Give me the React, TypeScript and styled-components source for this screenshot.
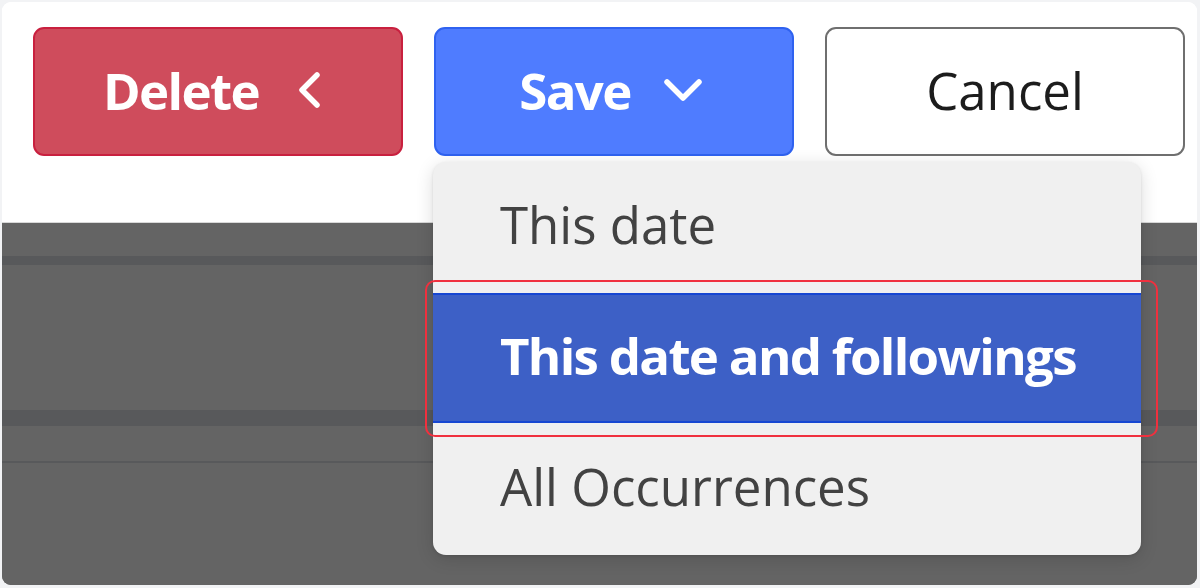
import React from "react";
import styled, { createGlobalStyle, css } from "styled-components";

const GlobalStyle = createGlobalStyle`
  * { box-sizing: border-box; }
  html, body {
    margin: 0;
    padding: 0;
    background: #f2f3f5;
    font-family: "Open Sans", "Noto Sans", Arial, sans-serif;
  }
`;

interface IButtonProps {
  variant: "danger" | "primary" | "plain";
  width: number;
  gap?: number;
  shift?: number;
}

interface IBandProps {
  height: number;
  dark?: boolean;
}

interface IItemProps {
  active?: boolean;
  height: number;
}

const ChevronLeft = () => (
  <svg width="24" height="36" viewBox="0 0 24 36" fill="none">
    <polyline
      points="19,3 4,18 19,33"
      stroke="#ffffff"
      strokeWidth="5.5"
      strokeLinecap="round"
      strokeLinejoin="round"
    />
  </svg>
);

const ChevronDown = () => (
  <svg width="40" height="26" viewBox="0 0 40 26" fill="none">
    <polyline
      points="4,5 20,21 36,5"
      stroke="#ffffff"
      strokeWidth="5.5"
      strokeLinecap="round"
      strokeLinejoin="round"
    />
  </svg>
);

const App = () => {
  return (
    <>
      <GlobalStyle />
      <Frame>
        <Card>
          <Toolbar>
            <ActionButton variant="danger" width={370} gap={39} shift={11}>
              Delete
              <ChevronLeft />
            </ActionButton>
            <ActionButton variant="primary" width={360} gap={32} shift={6}>
              Save
              <ChevronDown />
            </ActionButton>
            <ActionButton variant="plain" width={360}>
              Cancel
            </ActionButton>
          </Toolbar>
          <Backdrop>
            <Band height={33} />
            <Band height={9} dark />
            <Band height={145} />
            <Band height={16} dark />
            <Band height={35} />
            <Band height={2} dark />
            <Band height={0} />
          </Backdrop>
        </Card>

        <Menu>
          <MenuItem height={131}>This date</MenuItem>
          <MenuItem height={130} active>
            This date and followings
          </MenuItem>
          <MenuItem height={132}>All Occurrences</MenuItem>
        </Menu>
        <Highlight />
      </Frame>
    </>
  );
};

export default App;

export const Frame = styled.div`
  position: relative;
  width: 1200px;
  height: 588px;
  padding: 2px 3px 3px 2px;
  background: #f2f3f5;
`;

export const Card = styled.div`
  display: flex;
  flex-direction: column;
  width: 100%;
  height: 100%;
  border-radius: 9px;
  overflow: hidden;
  background: #ffffff;
`;

export const Toolbar = styled.div`
  display: flex;
  flex-direction: row;
  align-items: flex-start;
  gap: 31px;
  height: 221px;
  padding: 25px 0 0 31px;
  background: #ffffff;
  border-bottom: 1px solid #d8d8d8;
`;

const variants = {
  danger: css`
    background: #cf4c5c;
    border: 2px solid #c9203f;
    color: #ffffff;
    font-weight: 700;
    letter-spacing: -1.6px;
  `,
  primary: css`
    background: #4f7cff;
    border: 2px solid #2f62f0;
    color: #ffffff;
    font-weight: 700;
    letter-spacing: -1.6px;
  `,
  plain: css`
    background: #ffffff;
    border: 2px solid #6f6f6f;
    color: #1c1c1c;
    font-weight: 400;
    letter-spacing: 0;
  `,
};

export const ActionButton = styled.button<IButtonProps>`
  ${(props) => variants[props.variant]}
  display: flex;
  flex-direction: row;
  align-items: center;
  justify-content: center;
  gap: ${(props) => props.gap ?? 0}px;
  width: ${(props) => props.width}px;
  height: 129px;
  padding: 0 ${(props) => props.shift ?? 0}px 4px 0;
  border-radius: 11px;
  font-family: "Open Sans", "Noto Sans", Arial, sans-serif;
  font-size: 51px;
  cursor: pointer;
`;

export const Backdrop = styled.div`
  display: flex;
  flex-direction: column;
  flex: 1;
  background: #646464;
`;

export const Band = styled.div<IBandProps>`
  flex: ${(props) => (props.height === 0 ? "1" : "none")};
  height: ${(props) => props.height}px;
  background: ${(props) => (props.dark ? "#58595b" : "#646464")};
`;

export const Menu = styled.div`
  position: absolute;
  left: 433px;
  top: 162px;
  display: flex;
  flex-direction: column;
  width: 708px;
  border-radius: 13px;
  overflow: hidden;
  background: #f0f0f0;
  box-shadow: 0 4px 18px rgba(0, 0, 0, 0.14), 0 1px 3px rgba(0, 0, 0, 0.1);
`;

export const MenuItem = styled.div<IItemProps>`
  display: flex;
  align-items: center;
  height: ${(props) => props.height}px;
  padding: 0 0 7px 67px;
  font-size: 51px;
  letter-spacing: ${(props) => (props.active ? "-1.7px" : "0")};
  color: ${(props) => (props.active ? "#ffffff" : "#424242")};
  font-weight: ${(props) => (props.active ? 700 : 400)};
  background: ${(props) => (props.active ? "#3d60c6" : "transparent")};
  border-top: ${(props) => (props.active ? "2px solid #1747d2" : "none")};
  border-bottom: ${(props) => (props.active ? "2px solid #1747d2" : "none")};
`;

export const Highlight = styled.div`
  position: absolute;
  left: 425px;
  top: 280px;
  width: 733px;
  height: 157px;
  border: 2.5px solid #f0303e;
  border-radius: 10px;
  pointer-events: none;
`;
